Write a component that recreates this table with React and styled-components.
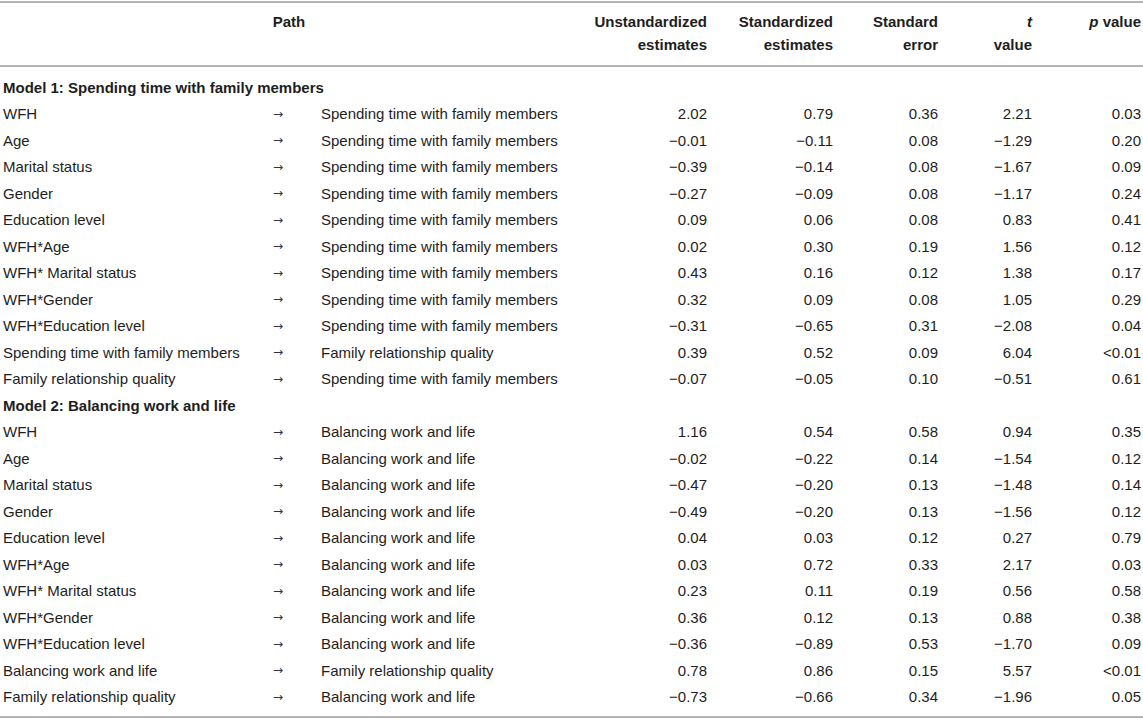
import React from 'react'
import styled, { createGlobalStyle } from 'styled-components'

const GlobalStyle = createGlobalStyle`
  html, body {
    margin: 0;
    padding: 0;
    background: #ffffff;
  }
  body {
    font-family: "Liberation Sans", Arial, Helvetica, sans-serif;
    color: #1e1e1e;
  }
`

const COLUMNS = '268px 48px 274px 122px 126px 105px 94px 106px'

const StyledTable = styled.div`
  width: 1143px;
  margin-top: 1px;
  border-top: 2px solid #b5b5b5;
  border-bottom: 2px solid #b5b5b5;
  font-size: 15px;
`

const StyledHead = styled.div`
  display: grid;
  grid-template-columns: ${COLUMNS};
  padding: 7px 0 9px;
  border-bottom: 2px solid #b5b5b5;
  line-height: 23px;
  font-weight: bold;
`

const StyledHeadCell = styled.div`
  grid-column: ${props => props.span || 'auto'};
  text-align: ${props => props.align || 'right'};
  padding-right: ${props => props.padRight || '5px'};
`

const StyledBody = styled.div`
  display: grid;
  grid-template-columns: ${COLUMNS};
  grid-auto-rows: 26.5px;
  padding: 7px 0 6px;
`

const StyledGroup = styled.div`
  grid-column: 1 / -1;
  display: flex;
  align-items: center;
  padding-left: 3px;
  font-weight: bold;
`

const StyledCell = styled.div`
  display: flex;
  align-items: center;
  justify-content: ${props => (props.numeric ? 'flex-end' : 'flex-start')};
  padding-left: ${props => props.padLeft || '0'};
  padding-right: ${props => (props.numeric ? props.padRight || '5px' : '0')};
  white-space: nowrap;
`

const StyledArrow = styled.span`
  font-family: "DejaVu Sans", sans-serif;
  font-size: 12px;
  color: #333333;
  line-height: 1;
`

const Italic = styled.i`
  font-style: italic;
`

const SPEND = 'Spending time with family members'
const BAL = 'Balancing work and life'
const FRQ = 'Family relationship quality'

const models = [
  {
    title: 'Model 1: Spending time with family members',
    rows: [
      ['WFH', SPEND, '2.02', '0.79', '0.36', '2.21', '0.03'],
      ['Age', SPEND, '−0.01', '−0.11', '0.08', '−1.29', '0.20'],
      ['Marital status', SPEND, '−0.39', '−0.14', '0.08', '−1.67', '0.09'],
      ['Gender', SPEND, '−0.27', '−0.09', '0.08', '−1.17', '0.24'],
      ['Education level', SPEND, '0.09', '0.06', '0.08', '0.83', '0.41'],
      ['WFH*Age', SPEND, '0.02', '0.30', '0.19', '1.56', '0.12'],
      ['WFH* Marital status', SPEND, '0.43', '0.16', '0.12', '1.38', '0.17'],
      ['WFH*Gender', SPEND, '0.32', '0.09', '0.08', '1.05', '0.29'],
      ['WFH*Education level', SPEND, '−0.31', '−0.65', '0.31', '−2.08', '0.04'],
      [SPEND, FRQ, '0.39', '0.52', '0.09', '6.04', '<0.01'],
      [FRQ, SPEND, '−0.07', '−0.05', '0.10', '−0.51', '0.61'],
    ],
  },
  {
    title: 'Model 2: Balancing work and life',
    rows: [
      ['WFH', BAL, '1.16', '0.54', '0.58', '0.94', '0.35'],
      ['Age', BAL, '−0.02', '−0.22', '0.14', '−1.54', '0.12'],
      ['Marital status', BAL, '−0.47', '−0.20', '0.13', '−1.48', '0.14'],
      ['Gender', BAL, '−0.49', '−0.20', '0.13', '−1.56', '0.12'],
      ['Education level', BAL, '0.04', '0.03', '0.12', '0.27', '0.79'],
      ['WFH*Age', BAL, '0.03', '0.72', '0.33', '2.17', '0.03'],
      ['WFH* Marital status', BAL, '0.23', '0.11', '0.19', '0.56', '0.58'],
      ['WFH*Gender', BAL, '0.36', '0.12', '0.13', '0.88', '0.38'],
      ['WFH*Education level', BAL, '−0.36', '−0.89', '0.53', '−1.70', '0.09'],
      [BAL, FRQ, '0.78', '0.86', '0.15', '5.57', '<0.01'],
      [FRQ, BAL, '−0.73', '−0.66', '0.34', '−1.96', '0.05'],
    ],
  },
]

const App = () => (
  <>
    <GlobalStyle />
    <StyledTable>
      <StyledHead>
        <StyledHeadCell span="1 / 4" align="center" padRight="12px">
          Path
        </StyledHeadCell>
        <StyledHeadCell>Unstandardized<br />estimates</StyledHeadCell>
        <StyledHeadCell>Standardized<br />estimates</StyledHeadCell>
        <StyledHeadCell>Standard<br />error</StyledHeadCell>
        <StyledHeadCell><Italic>t</Italic><br />value</StyledHeadCell>
        <StyledHeadCell padRight="2px"><Italic>p</Italic> value</StyledHeadCell>
      </StyledHead>
      <StyledBody>
        {models.map(model => (
          <React.Fragment key={model.title}>
            <StyledGroup>{model.title}</StyledGroup>
            {model.rows.map((row, i) => (
              <React.Fragment key={i}>
                <StyledCell padLeft="3px">{row[0]}</StyledCell>
                <StyledCell padLeft="5px"><StyledArrow>→</StyledArrow></StyledCell>
                <StyledCell padLeft="5px">{row[1]}</StyledCell>
                <StyledCell numeric>{row[2]}</StyledCell>
                <StyledCell numeric>{row[3]}</StyledCell>
                <StyledCell numeric>{row[4]}</StyledCell>
                <StyledCell numeric>{row[5]}</StyledCell>
                <StyledCell numeric padRight="2px">{row[6]}</StyledCell>
              </React.Fragment>
            ))}
          </React.Fragment>
        ))}
      </StyledBody>
    </StyledTable>
  </>
)

export default App
